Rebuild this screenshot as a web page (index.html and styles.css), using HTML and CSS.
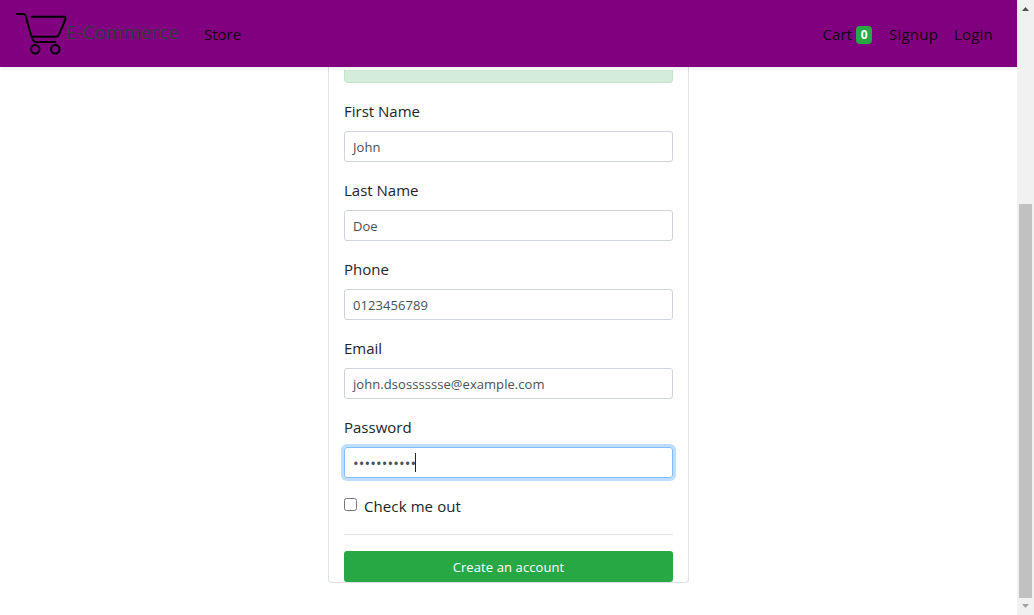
FILE: index.html
```html
<!DOCTYPE html>
<html lang="en">
<head>
<meta charset="utf-8">
<title>E-Commerce</title>
<link rel="stylesheet" href="styles.css">
</head>
<body>
<div class="page">
  <header class="navbar">
    <a class="brand">
      <svg class="logo" width="52" height="44" viewBox="0 0 52 44" fill="none" stroke="#000" stroke-width="2" stroke-linecap="round" stroke-linejoin="round">
        <path d="M1 3H7.500Q9 3 9.500 4.500L15.500 25.500Q17 31 20 31H39.500"/>
        <path d="M15.500 5.700H48.500Q50 5.700 49.500 8L43 23.500Q42 25.700 40 25.700H16"/>
        <circle cx="19.300" cy="38.200" r="4.200"/>
        <circle cx="39.300" cy="38.200" r="4.200"/>
      </svg>
      <span class="brand-name">E-Commerce</span>
    </a>
    <a class="nav-link store">Store</a>
    <nav class="nav-right">
      <a class="nav-link cart">Cart</a><span class="badge">0</span>
      <a class="nav-link signup">Signup</a>
      <a class="nav-link login">Login</a>
    </nav>
  </header>
  <main class="content">
    <form class="card">
      <div class="alert"></div>
      <div class="group"><label class="label">First Name</label><div class="control">John</div></div>
      <div class="group"><label class="label">Last Name</label><div class="control">Doe</div></div>
      <div class="group"><label class="label">Phone</label><div class="control">0123456789</div></div>
      <div class="group"><label class="label">Email</label><div class="control">john.dsosssssse@example.com</div></div>
      <div class="group"><label class="label">Password</label><div class="control focused"><span class="dots">•••••••••••</span><span class="caret"></span></div></div>
      <label class="check"><input type="checkbox" class="box"><span class="check-text">Check me out</span></label>
      <hr class="rule">
      <button type="button" class="submit">Create an account</button>
    </form>
  </main>
</div>
<div class="scrollbar">
  <svg class="arrow" width="17" height="17" viewBox="0 0 17 17"><path d="M5 11L8.500 7L12 11Z" fill="#505050"/></svg>
  <div class="track"><div class="thumb"></div></div>
  <svg class="arrow" width="17" height="17" viewBox="0 0 17 17"><path d="M5 6L8.500 10L12 6Z" fill="#a3a3a3"/></svg>
</div>
</body>
</html>
```
FILE: styles.css
```css
* { box-sizing: border-box; }
body {
  margin: 0;
  height: 615px;
  display: flex;
  overflow: hidden;
  background: #fff;
  color: #212529;
  font: 15px/24px "Open Sans", "Noto Sans", sans-serif;
}
.page { width: 1017px; height: 615px; display: flex; flex-direction: column; }
.navbar {
  position: relative;
  z-index: 1;
  height: 67px;
  flex: none;
  display: flex;
  align-items: center;
  padding: 0 24px 2px 16px;
  background: purple;
  box-shadow: 0 2px 4px rgba(0, 0, 0, .075);
}
.brand { display: flex; align-items: center; width: 188px; }
.logo { flex: none; }
.brand-name { font-size: 19px; color: #343a40; letter-spacing: -.1px; margin: -2px 0 0 -2px; white-space: nowrap; }
.nav-link { color: rgba(0, 0, 0, .9); padding-top: 2px; white-space: nowrap; }
.nav-right { margin-left: auto; display: flex; align-items: center; }
.badge {
  width: 16px;
  height: 18px;
  margin: 4px 17px 0 4px;
  border-radius: 4px;
  background: #28a745;
  color: #fff;
  font-size: 12px;
  font-weight: 700;
  line-height: 18px;
  text-align: center;
}
.cart { letter-spacing: .1px; }
.signup { margin-right: 16px; letter-spacing: .2px; }
.login { letter-spacing: .2px; }
.content { flex: 1; display: flex; justify-content: center; align-items: flex-start; }
.card {
  width: 361px;
  height: 516px;
  padding: 0 15px;
  border: 1px solid #dee2e6;
  border-top: 0;
  border-radius: 0 0 4px 4px;
  display: flex;
  flex-direction: column;
}
.alert {
  height: 13px;
  flex: none;
  margin: 3px 0 16px;
  background: #d4edda;
  border: 1px solid #c3e6cb;
  border-top: 0;
  border-radius: 0 0 4px 4px;
}
.group { margin-bottom: 16px; }
.label { display: block; margin-bottom: 8px; }
.control {
  height: 31px;
  display: flex;
  align-items: center;
  padding: 0 8px;
  border: 1px solid #ced4da;
  border-radius: 3px;
  color: #495057;
  font-size: 13px;
  letter-spacing: .06px;
}
.focused { border-color: #80bdff; box-shadow: 0 0 0 3px #bfdeff; }
.dots { width: 62px; font-size: 15px; letter-spacing: .1px; white-space: nowrap; }
.caret { width: 1px; height: 19px; background: #212529; }
.check { display: flex; height: 24px; letter-spacing: .1px; }
.box { width: 13px; height: 13px; margin: 4px 7px 0 0; }
.rule { width: 100%; margin: 16px 0; border: 0; border-top: 1px solid #e5e5e5; }
.submit {
  height: 31px;
  flex: none;
  padding: 2px 0 0;
  border: 0;
  border-radius: 3px;
  background: #28a745;
  color: #fff;
  font: 13px/21px "Open Sans", "Noto Sans", sans-serif;
  letter-spacing: .1px;
}
.scrollbar { width: 17px; height: 615px; display: flex; flex-direction: column; background: #f1f1f1; }
.arrow { flex: none; }
.track { flex: 1; padding: 187px 2px 0; }
.thumb { height: 394px; background: #c1c1c1; }
```
